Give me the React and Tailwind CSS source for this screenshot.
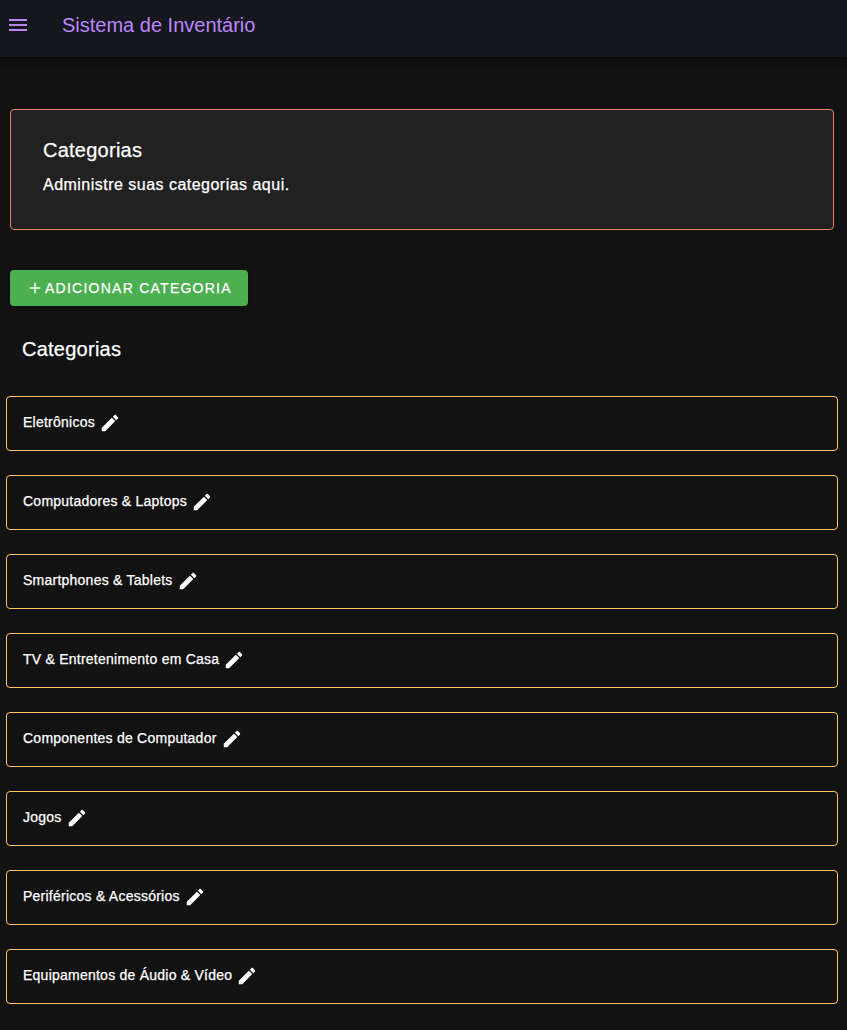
const categories = [
  "Eletrônicos",
  "Computadores & Laptops",
  "Smartphones & Tablets",
  "TV & Entretenimento em Casa",
  "Componentes de Computador",
  "Jogos",
  "Periféricos & Acessórios",
  "Equipamentos de Áudio & Vídeo",
];

function MenuIcon() {
  return (
    <svg viewBox="0 0 24 24" className="size-6" fill="currentColor">
      <path d="M3,6H21V8H3V6M3,11H21V13H3V11M3,16H21V18H3V16Z" />
    </svg>
  );
}

function PlusIcon() {
  return (
    <svg viewBox="0 0 24 24" className="size-[18px]" fill="currentColor">
      <path d="M19,13H13V19H11V13H5V11H11V5H13V11H19V13Z" />
    </svg>
  );
}

function PencilIcon() {
  return (
    <svg viewBox="0 0 24 24" className="size-[22px]" fill="currentColor">
      <path d="M20.71,7.04C21.1,6.65 21.1,6 20.71,5.63L18.37,3.29C18,2.9 17.35,2.9 16.96,3.29L15.12,5.12L18.87,8.87M3,17.25V21H6.75L17.81,9.93L14.06,6.18L3,17.25Z" />
    </svg>
  );
}

function CategoryRow({ name }) {
  return (
    <li className="flex h-[55px] items-start rounded border border-[#ffc55c] pl-4 pt-[15px]">
      <span className="text-sm leading-5 tracking-[0.24px] [-webkit-text-stroke:0.25px]">{name}</span>
      <button aria-label="Editar" className="ml-1 flex">
        <PencilIcon />
      </button>
    </li>
  );
}

export default function App() {
  return (
    <div className="flex h-[1030px] flex-col overflow-hidden bg-[#121212] font-['Liberation_Sans',Arial,sans-serif] text-white">
      <header className="flex h-[57px] shrink-0 items-start bg-[#16171d] pl-1.5 pt-[13px] text-[#bb86fc] shadow-[0_2px_4px_-1px_rgba(0,0,0,0.2),0_4px_5px_rgba(0,0,0,0.14),0_1px_10px_rgba(0,0,0,0.12)]">
        <button aria-label="Menu">
          <MenuIcon />
        </button>
        <h1 className="ml-8 text-xl leading-6">Sistema de Inventário</h1>
      </header>

      <main className="flex flex-col">
        <section className="ml-2.5 mr-[13px] mt-[52px] h-[121px] rounded border border-[#e87c68] bg-[#212121] pl-8 pt-6">
          <h2 className="text-xl leading-8 tracking-[0.25px] [-webkit-text-stroke:0.25px]">Categorias</h2>
          <p className="mt-[5px] text-base leading-7 tracking-[0.48px] [-webkit-text-stroke:0.25px]">Administre suas categorias aqui.</p>
        </section>

        <button className="ml-2.5 mt-10 flex h-9 w-[238px] items-center rounded bg-[#4caf50] pl-4 text-sm tracking-[1.25px] shadow-md [-webkit-text-stroke:0.25px]">
          <PlusIcon />
          <span className="ml-px">ADICIONAR CATEGORIA</span>
        </button>

        <h2 className="ml-[22px] mt-[27px] text-xl leading-8 tracking-[0.25px] [-webkit-text-stroke:0.25px]">Categorias</h2>

        <ul className="ml-1.5 mr-[9px] mt-[31px] flex flex-col gap-6">
          {categories.map((name) => (
            <CategoryRow key={name} name={name} />
          ))}
        </ul>
      </main>
    </div>
  );
}
